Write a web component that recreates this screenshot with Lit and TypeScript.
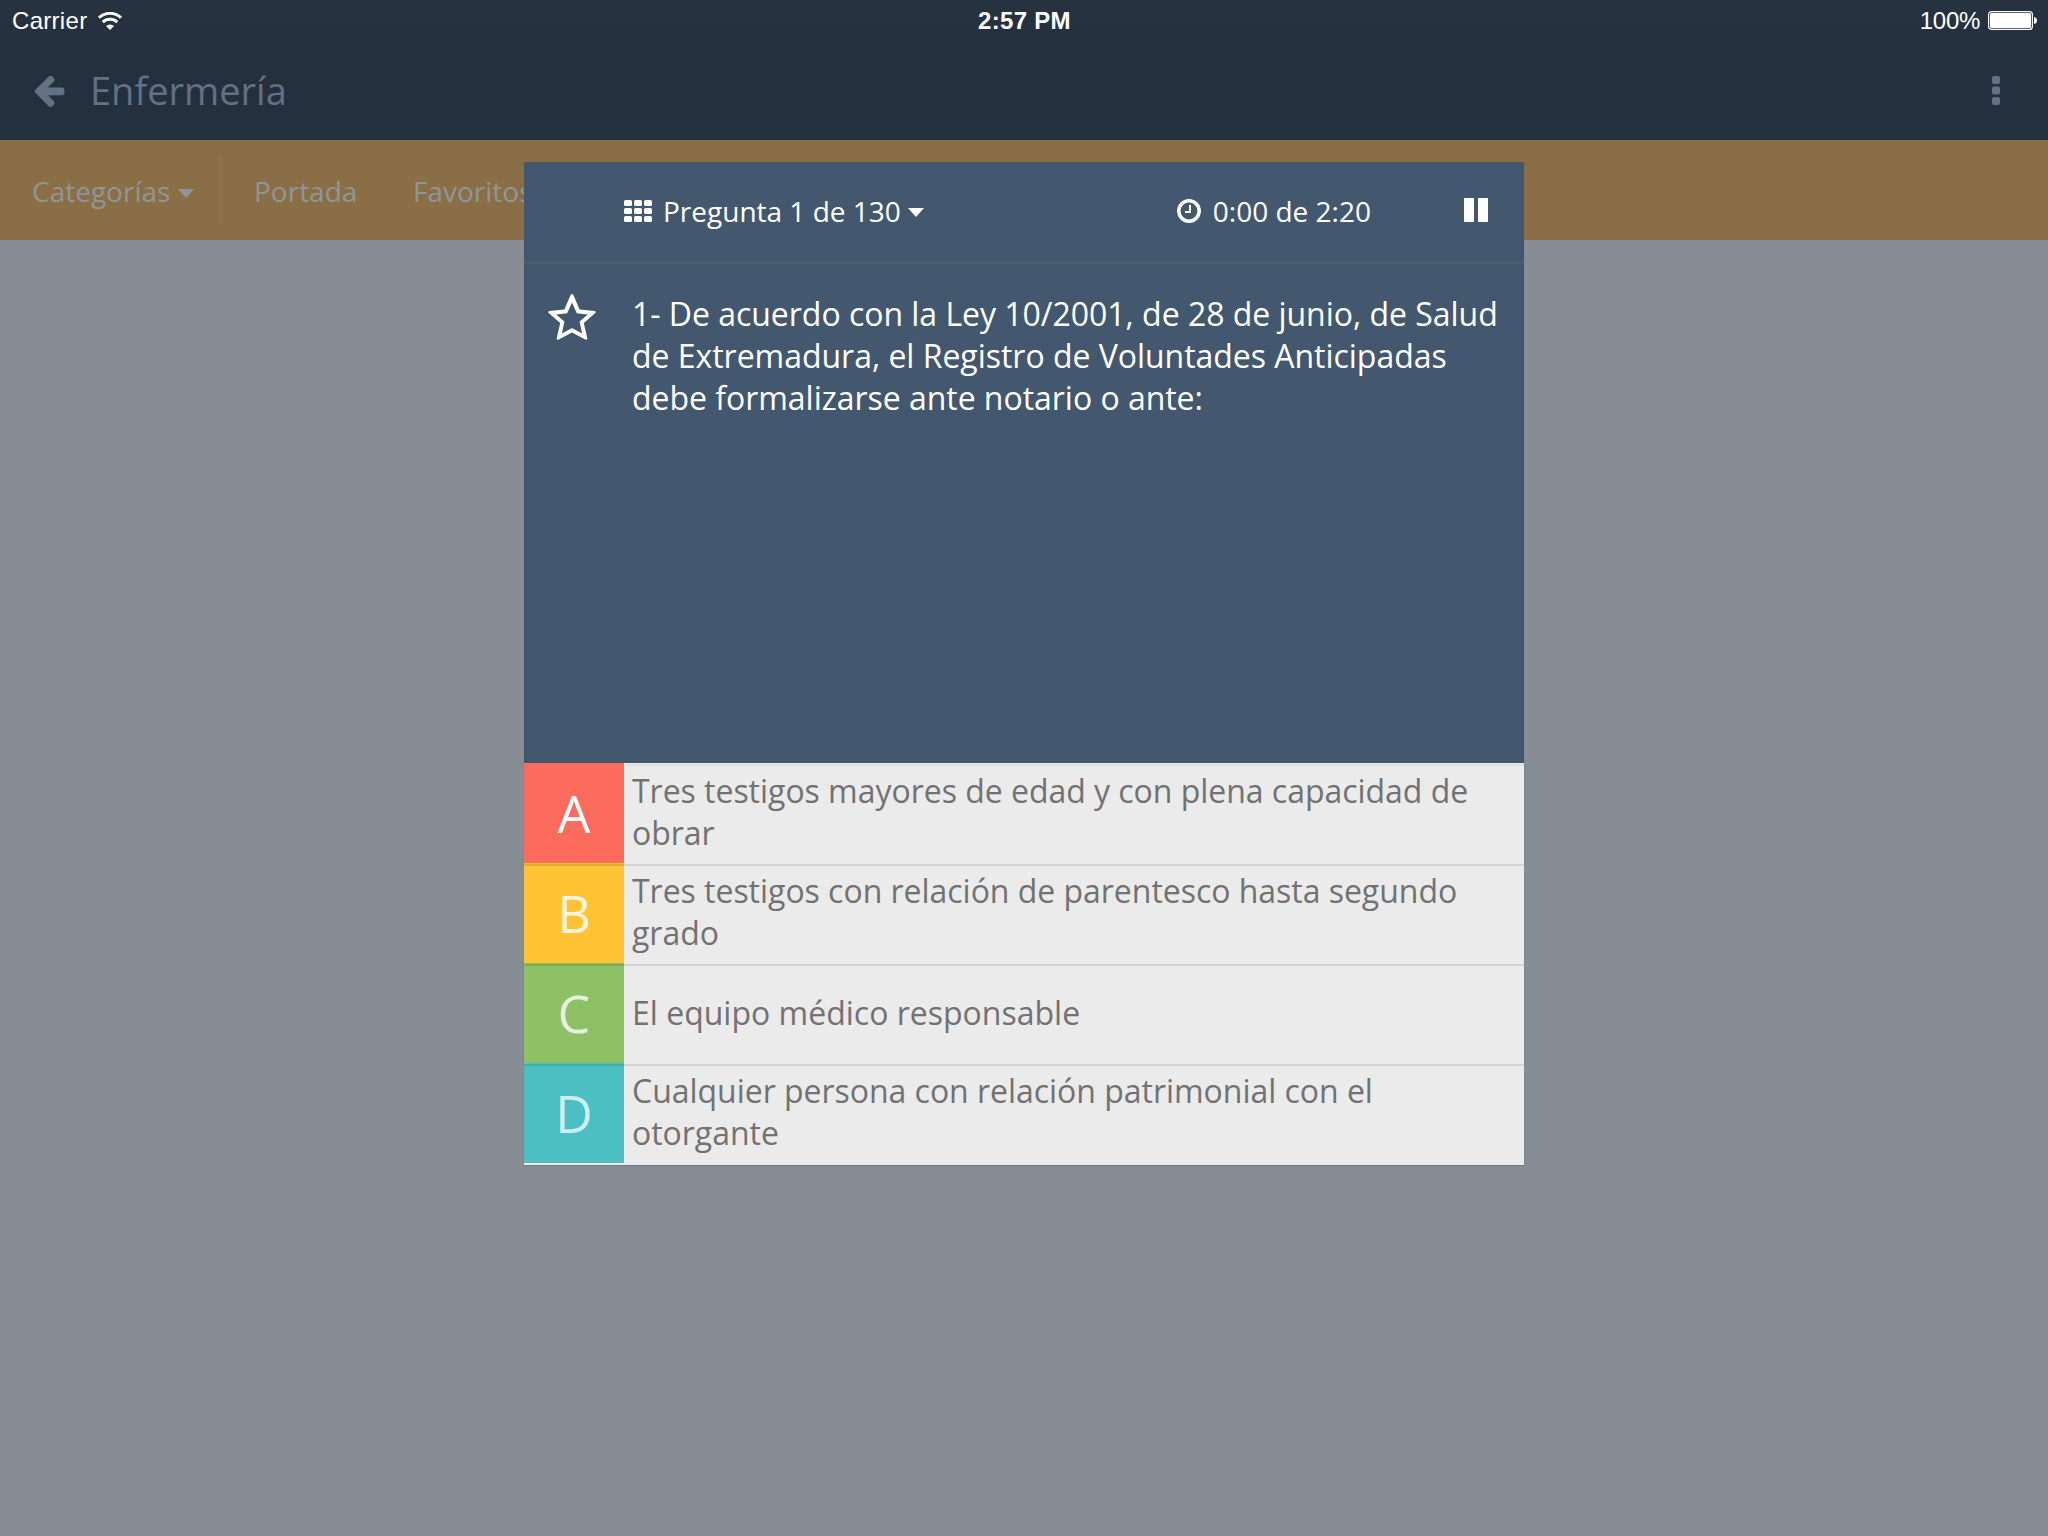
import { LitElement, html, css, svg } from "lit";
import { customElement } from "lit/decorators.js";

interface Option { key: string; text: string; }

const options: Option[] = [
  { key: "A", text: "Tres testigos mayores de edad y con plena capacidad de obrar" },
  { key: "B", text: "Tres testigos con relación de parentesco hasta segundo grado" },
  { key: "C", text: "El equipo médico responsable" },
  { key: "D", text: "Cualquier persona con relación patrimonial con el otorgante" },
];

const cells = [0, 1, 2].flatMap((r) => [0, 1, 2].map((c) => svg`<rect x=${c * 10} y=${r * 8} width="8" height="6" rx="1.6"/>`));

@customElement("app-root")
export class AppRoot extends LitElement {
  static styles = css`
    :host { display: block; width: 2048px; height: 1536px; position: relative; overflow: hidden;
      background: #868d95; font-family: "Open Sans", sans-serif; }
    * { box-sizing: border-box; }
    svg { display: block; fill: currentColor; flex: none; }
    .top { height: 140px; background: linear-gradient(#273340, #25303e 45px); display: flex; flex-direction: column; }
    .status { height: 40px; display: grid; grid-template-columns: 1fr auto 1fr; align-items: center;
      padding: 2px 11px 0 12px; color: #fff; font: 24px/36px "Liberation Sans", sans-serif; }
    .left { display: flex; align-items: center; gap: 11px; letter-spacing: .3px; }
    .right { display: flex; align-items: center; justify-content: flex-end; gap: 8px; letter-spacing: -.3px; }
    .clock { font-weight: 700; letter-spacing: .3px; }
    .bar { height: 100px; display: flex; align-items: center; color: #627183; padding: 0 48px 0 32px; }
    .bar svg { margin-left: -1px; }
    .title { font-size: 38px; line-height: 60px; margin: -1px auto 0 23px; }
    .nav { height: 100px; background: #8a6e46; color: #90959a; display: flex; align-items: center; padding-top: 2px; font-size: 28px; line-height: 40px; }
    .cat { display: flex; align-items: center; gap: 8px; height: 70px; width: 222px; padding-left: 32px; background: linear-gradient(#8a7256, #8a7256) 220px -1px / 2px 70px no-repeat; }
    .nav .caret { margin-top: 4px; }
    .link { padding-left: 32px; width: 159px; }
    .dialog { position: absolute; left: 524px; top: 162px; width: 1000px; height: 1003px; display: flex; flex-direction: column;
      background: #43586e; color: #fff; box-shadow: 0 1px 1px rgba(0,0,0,.12); }
    .head { height: 102px; border-bottom: 2px solid #4b5f72; display: flex; align-items: center; padding: 0 36px 2px 100px; font-size: 28px; }
    .count { display: flex; align-items: center; gap: 11px; }
    .count .caret { margin: 3px 0 0 -4px; }
    .time { display: flex; align-items: center; gap: 12px; margin: 0 93px 0 auto; }
    .pause { margin-bottom: 2px; }
    .question { height: 499px; display: grid; grid-template-columns: 100px 1fr; font-size: 32px; line-height: 42px; padding-top: 29px; letter-spacing: -.03px; }
    .star { padding: 1px 0 0 24px; }
    .text { padding: 0 0 0 8px; }
    .option { height: 100px; display: grid; grid-template-columns: 100px 1fr; background: #ebebeb; }
    .key { font-size: 52px; display: flex; align-items: center; justify-content: center; padding-bottom: 1px; }
    .a { background: #fc6b5c; color: #fff; }
    .b { background: linear-gradient(#fcc233 1px, #e2ad2f 1px 3px, #ffc333 3px); color: #fff5de; }
    .c { background: linear-gradient(#8dc165 1px, #7fac5c 1px 3px, #8ec165 3px); color: #e5f1dc; }
    .d { background: linear-gradient(#4bbfc1 1px, #44aaac 1px 3px, #4cbfc2 3px); color: #ccecee; }
    .answer { display: flex; align-items: center; padding: 0 40px 2px 8px; font-size: 32px; line-height: 42px; letter-spacing: -.03px; color: #727272;
      background: linear-gradient(#ebebeb 1px, #d4d4d4 1px 3px, #ebebeb 3px); }
    .a + .answer { background: linear-gradient(#ebebeb 1px, #e0e0e0 1px 3px, #ebebeb 3px); }
    .c + .answer { padding-bottom: 0; letter-spacing: 0; }
    .foot { height: 2px; background: #ebebeb; }
  `;

  caret() {
    return html`<svg class="caret" width="16" height="9" viewBox="0 0 16 9"><path d="M0 0H16L8 9Z"/></svg>`;
  }

  render() {
    return html`
      <div class="top">
        <div class="status">
          <div class="left"><span>Carrier</span>
            <svg width="24" height="18" viewBox="0 0 24 18"><path d="M12 18L8 14A6 6 0 0 1 16 14Z"/><path d="M1 5.700A16 16 0 0 1 23 5.700M4.800 10.200A10.500 10.500 0 0 1 19.200 10.200" fill="none" stroke="currentColor" stroke-width="3"/></svg>
          </div>
          <span class="clock">2:57 PM</span>
          <div class="right"><span>100%</span>
            <svg width="49" height="20" viewBox="0 0 49 20"><rect x=".6" y=".6" width="43.800" height="17.800" rx="3" fill="none" stroke="currentColor" stroke-width="1.200"/><rect x="2" y="2" width="41" height="15" rx="1.500"/><path d="M46 6Q49 6.500 49 9.500T46 13Z"/></svg>
          </div>
        </div>
        <div class="bar">
          <svg width="36" height="36" viewBox="0 0 1792 1792"><path d="M1664 896v128q0 53-32.500 90.500t-84.500 37.500h-704l293 294q38 36 38 90t-38 90l-75 76q-37 37-90 37-52 0-91-37l-651-652q-37-37-37-90 0-52 37-91l651-650q38-38 91-38 52 0 90 38l75 74q38 38 38 91t-38 91l-293 293h704q52 0 84.500 37.500t32.500 90.500z"/></svg>
          <span class="title">Enfermería</span>
          <svg width="8" height="29" viewBox="0 0 8 29"><rect width="8" height="8" rx="2"/><rect y="10.500" width="8" height="8" rx="2"/><rect y="21" width="8" height="8" rx="2"/></svg>
        </div>
      </div>
      <div class="nav">
        <div class="cat"><span>Categorías</span>${this.caret()}</div>
        <span class="link">Portada</span><span class="link">Favoritos</span>
      </div>
      <div class="dialog">
        <div class="head">
          <div class="count"><svg width="28" height="22" viewBox="0 0 28 22">${cells}</svg><span>Pregunta 1 de 130</span>${this.caret()}</div>
          <div class="time"><svg width="24" height="24" viewBox="0 0 24 24"><circle cx="12" cy="12" r="10.200" fill="none" stroke="currentColor" stroke-width="3.500"/><path d="M12 6H14V14H8V12H12Z"/></svg><span>0:00 de 2:20</span></div>
          <svg class="pause" width="24" height="24" viewBox="0 0 24 24"><rect width="10" height="24" rx=".8"/><rect x="14" width="10" height="24" rx=".8"/></svg>
        </div>
        <div class="question">
          <div class="star"><svg width="48" height="46" viewBox="0 0 48 46"><path fill-rule="evenodd" d="M22.700 .8Q24 -.8 25.300 .8L31.600 15.600L46.500 16.900Q48.600 17.400 47.300 19L35.800 28.900L39.300 44.200Q39.300 46.300 37.300 45.600L24 38.600L10.700 45.600Q8.700 46.300 8.700 44.200L12.200 28.900L.7 19Q-.6 17.400 1.500 16.900L16.400 15.600ZM24 8.500L19.200 19.200L8.200 20.500L16.400 27.500L13.900 39.400L24 34L34.100 39.400L31.600 27.500L39.800 20.500L28.800 19.200Z"/></svg></div>
          <div class="text">1- De acuerdo con la Ley 10/2001, de 28 de junio, de Salud de Extremadura, el Registro de Voluntades Anticipadas debe formalizarse ante notario o ante:</div>
        </div>
        ${options.map((o) => html`<div class="option"><div class="key ${o.key.toLowerCase()}">${o.key}</div><div class="answer">${o.text}</div></div>`)}
        <div class="foot"></div>
      </div>`;
  }
}
